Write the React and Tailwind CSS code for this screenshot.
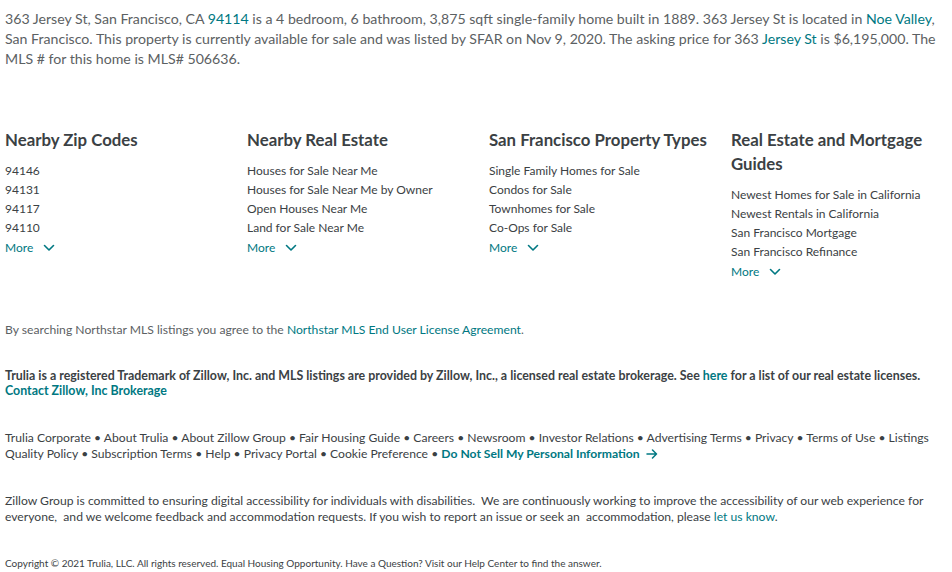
import React from 'react';

const Chevron = () => (
    <svg width="12" height="8" viewBox="0 0 12 8" fill="none" className="ml-[10px]">
        <path d="M1.5 1.5 L6 6 L10.5 1.5" stroke="#007882" strokeWidth="1.6" strokeLinecap="round" strokeLinejoin="round" />
    </svg>
);

const columns = [
    { title: 'Nearby Zip Codes', items: ['94146', '94131', '94117', '94110'] },
    { title: 'Nearby Real Estate', items: ['Houses for Sale Near Me', 'Houses for Sale Near Me by Owner', 'Open Houses Near Me', 'Land for Sale Near Me'] },
    { title: 'San Francisco Property Types', items: ['Single Family Homes for Sale', 'Condos for Sale', 'Townhomes for Sale', 'Co-Ops for Sale'] },
    { title: 'Real Estate and Mortgage Guides', items: ['Newest Homes for Sale in California', 'Newest Rentals in California', 'San Francisco Mortgage', 'San Francisco Refinance'] },
];

const links = ['Trulia Corporate', 'About Trulia', 'About Zillow Group', 'Fair Housing Guide', 'Careers', 'Newsroom', 'Investor Relations', 'Advertising Terms', 'Privacy', 'Terms of Use', 'Listings Quality Policy', 'Subscription Terms', 'Help', 'Privacy Portal', 'Cookie Preference'];

export default function App() {
    return (
        <div className="w-[952px] h-[572px] overflow-hidden bg-white px-[5px] pt-[9px] font-['Lato',sans-serif] text-[#3b4144]">
            <p className="text-[14.15px] leading-[20px] text-[#5c6163]">
                363 Jersey St, San Francisco, CA <a className="text-[#007882]">94114</a> is a 4 bedroom, 6 bathroom, 3,875 sqft single-family home built in 1889. 363 Jersey St is located in <a className="text-[#007882]">Noe Valley</a>, San Francisco. This property is currently available for sale and was listed by SFAR on Nov 9, 2020. The asking price for 363 <a className="text-[#007882]">Jersey St</a> is $6,195,000. The MLS # for this home is MLS# 506636.
            </p>

            <div className="grid grid-cols-[242px_242px_242px_210px] mt-[59px]">
                {columns.map(col => (
                    <div key={col.title}>
                        <h3 className="text-[16.8px] leading-[24px] font-bold text-[#3b4144] mb-[9px]">{col.title}</h3>
                        <ul className="text-[12px] leading-[19px] text-[#3b4144]">
                            {col.items.map(item => <li key={item}>{item}</li>)}
                        </ul>
                        <div className="mt-[1px] flex items-center text-[12px] leading-[20px] text-[#007882]">More <Chevron /></div>
                    </div>
                ))}
            </div>

            <p className="mt-[40px] text-[12.15px] leading-[16px] text-[#5c6163]">
                By searching Northstar MLS listings you agree to the <a className="text-[#007882]">Northstar MLS End User License Agreement</a>.
            </p>

            <p className="mt-[30px] text-[12.4px] leading-[15px] font-bold text-[#3b4144]">
                Trulia is a registered Trademark of Zillow, Inc. and MLS listings are provided by Zillow, Inc., a licensed real estate brokerage. See <a className="text-[#007882]">here</a> for a list of our real estate licenses.<br />
                <a className="text-[#007882]">Contact Zillow, Inc Brokerage</a>
            </p>

            <p className="mt-[32px] text-[12.15px] leading-[16px] text-[#3b4144]">
                {links.join(' • ') + ' • '}
                <a className="font-bold text-[#007882] inline-flex items-center">Do Not Sell My Personal Information
                    <svg width="12" height="10" viewBox="0 0 12 10" fill="none" className="ml-[6px]">
                        <path d="M1 5 H10.5 M6.5 1 L10.5 5 L6.5 9" stroke="#007882" strokeWidth="1.5" strokeLinecap="round" strokeLinejoin="round" />
                    </svg>
                </a>
            </p>

            <p className="mt-[31px] text-[12.15px] leading-[16px] text-[#3b4144]">
                Zillow Group is committed to ensuring digital accessibility for individuals with disabilities.&nbsp; We are continuously working to improve the accessibility of our web experience for everyone,&nbsp; and we welcome feedback and accommodation requests. If you wish to report an issue or seek an&nbsp; accommodation, please <a className="text-[#007882]">let us know</a>.
            </p>

            <p className="mt-[31px] text-[10px] leading-[14px] text-[#3b4144]">
                Copyright © 2021 Trulia, LLC. All rights reserved. Equal Housing Opportunity. Have a Question? Visit our Help Center to find the answer.
            </p>
        </div>
    );
}
